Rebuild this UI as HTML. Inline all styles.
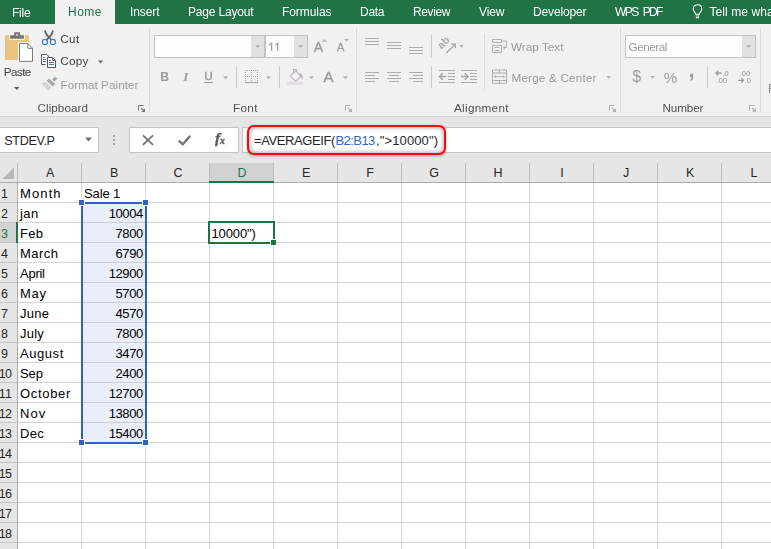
<!DOCTYPE html>
<html><head><meta charset="utf-8"><title>Excel</title>
<style>
html,body{margin:0;padding:0;}
body{width:771px;height:549px;overflow:hidden;position:relative;background:#fff;font-family:"Liberation Sans",sans-serif;}
.t{position:absolute;white-space:nowrap;line-height:1;}
.r{position:absolute;}
svg{position:absolute;left:0;top:0;overflow:visible;}
</style></head><body>

<div class="r" style="left:0px;top:117px;width:771px;height:46px;background:#e6e6e6;"></div>
<div class="r" style="left:-1px;top:127px;width:100px;height:26px;background:#fff;border:1px solid #c6c6c6;box-sizing:border-box;"></div>
<span class="t" style="left:4.20px;top:135.33px;font-size:12.6px;color:#262626;letter-spacing:-0.326px;">STDEV.P</span>
<div class="r" style="left:129px;top:127px;width:110px;height:26px;background:#fff;border:1px solid #c6c6c6;box-sizing:border-box;"></div>
<div class="r" style="left:242px;top:127px;width:530px;height:26px;background:#fff;border:1px solid #c6c6c6;box-sizing:border-box;"></div>
<div class="r" style="left:113px;top:135px;width:2px;height:2px;background:#a2a2a2;"></div>
<div class="r" style="left:113px;top:139px;width:2px;height:2px;background:#a2a2a2;"></div>
<div class="r" style="left:113px;top:143px;width:2px;height:2px;background:#a2a2a2;"></div>
<svg width="771" height="165" viewBox="0 0 771 165"><path d="M85 137.4 L92 137.4 L88.5 141.4 Z" fill="#6e6e6e"/><path d="M142.9 135.4 L153 144.8 M153 135.4 L142.9 144.8" stroke="#707070" stroke-width="1.7" fill="none"/><path d="M178.7 140.6 L182.8 144.3 L190.3 135.8" stroke="#737373" stroke-width="2.3" fill="none"/></svg>
<span class="t" style="left:215.30px;top:130.08px;font-size:15.5px;color:#5c5c5c;font-weight:bold;font-style:italic;font-family:'Liberation Serif',serif;will-change:transform;-webkit-text-stroke:0.35px #5c5c5c;">f</span>
<span class="t" style="left:219.80px;top:135.83px;font-size:9.8px;color:#5c5c5c;font-weight:bold;font-style:italic;font-family:'Liberation Serif',serif;will-change:transform;-webkit-text-stroke:0.35px #5c5c5c;">x</span>
<div class="r" style="left:247.3px;top:125.4px;width:198.8px;height:29.8px;background:#fff;border:2.1px solid #fd0808;border-radius:7px;box-sizing:border-box;box-shadow:inset 0 0 5px rgba(0,0,0,.45),0 1px 3px rgba(0,0,0,.3);"></div>
<span class="t" style="left:254.00px;top:134.00px;font-size:13px;color:#262626;letter-spacing:-0.406px;">=AVERAGEIF(</span>
<span class="t" style="left:335.50px;top:134.00px;font-size:13px;color:#3565c8;letter-spacing:-0.569px;">B2:B13</span>
<span class="t" style="left:376.00px;top:134.00px;font-size:13px;color:#262626;letter-spacing:0.121px;">,"&gt;10000")</span>
<div class="r" style="left:0px;top:163px;width:771px;height:20px;background:#e6e6e6;"></div>
<div class="r" style="left:0px;top:182px;width:771px;height:1px;background:#ababab;"></div>
<div class="r" style="left:0px;top:183px;width:18px;height:366px;background:#e6e6e6;"></div>
<div class="r" style="left:17px;top:183px;width:1px;height:366px;background:#ababab;"></div>
<div class="r" style="left:17px;top:163px;width:1px;height:19px;background:#bdbdbd;"></div>
<div class="r" style="left:81px;top:183px;width:1px;height:366px;background:#d4d4d4;"></div>
<div class="r" style="left:81px;top:163px;width:1px;height:19px;background:#bdbdbd;"></div>
<div class="r" style="left:145px;top:183px;width:1px;height:366px;background:#d4d4d4;"></div>
<div class="r" style="left:145px;top:163px;width:1px;height:19px;background:#bdbdbd;"></div>
<div class="r" style="left:209px;top:183px;width:1px;height:366px;background:#d4d4d4;"></div>
<div class="r" style="left:209px;top:163px;width:1px;height:19px;background:#bdbdbd;"></div>
<div class="r" style="left:273px;top:183px;width:1px;height:366px;background:#d4d4d4;"></div>
<div class="r" style="left:273px;top:163px;width:1px;height:19px;background:#bdbdbd;"></div>
<div class="r" style="left:337px;top:183px;width:1px;height:366px;background:#d4d4d4;"></div>
<div class="r" style="left:337px;top:163px;width:1px;height:19px;background:#bdbdbd;"></div>
<div class="r" style="left:401px;top:183px;width:1px;height:366px;background:#d4d4d4;"></div>
<div class="r" style="left:401px;top:163px;width:1px;height:19px;background:#bdbdbd;"></div>
<div class="r" style="left:465px;top:183px;width:1px;height:366px;background:#d4d4d4;"></div>
<div class="r" style="left:465px;top:163px;width:1px;height:19px;background:#bdbdbd;"></div>
<div class="r" style="left:529px;top:183px;width:1px;height:366px;background:#d4d4d4;"></div>
<div class="r" style="left:529px;top:163px;width:1px;height:19px;background:#bdbdbd;"></div>
<div class="r" style="left:593px;top:183px;width:1px;height:366px;background:#d4d4d4;"></div>
<div class="r" style="left:593px;top:163px;width:1px;height:19px;background:#bdbdbd;"></div>
<div class="r" style="left:657px;top:183px;width:1px;height:366px;background:#d4d4d4;"></div>
<div class="r" style="left:657px;top:163px;width:1px;height:19px;background:#bdbdbd;"></div>
<div class="r" style="left:721px;top:183px;width:1px;height:366px;background:#d4d4d4;"></div>
<div class="r" style="left:721px;top:163px;width:1px;height:19px;background:#bdbdbd;"></div>
<div class="r" style="left:785px;top:183px;width:1px;height:366px;background:#d4d4d4;"></div>
<div class="r" style="left:785px;top:163px;width:1px;height:19px;background:#bdbdbd;"></div>
<div class="r" style="left:18px;top:202px;width:753px;height:1px;background:#d4d4d4;"></div>
<div class="r" style="left:0px;top:202px;width:17px;height:1px;background:#c6c6c6;"></div>
<div class="r" style="left:18px;top:222px;width:753px;height:1px;background:#d4d4d4;"></div>
<div class="r" style="left:0px;top:222px;width:17px;height:1px;background:#c6c6c6;"></div>
<div class="r" style="left:18px;top:242px;width:753px;height:1px;background:#d4d4d4;"></div>
<div class="r" style="left:0px;top:242px;width:17px;height:1px;background:#c6c6c6;"></div>
<div class="r" style="left:18px;top:262px;width:753px;height:1px;background:#d4d4d4;"></div>
<div class="r" style="left:0px;top:262px;width:17px;height:1px;background:#c6c6c6;"></div>
<div class="r" style="left:18px;top:282px;width:753px;height:1px;background:#d4d4d4;"></div>
<div class="r" style="left:0px;top:282px;width:17px;height:1px;background:#c6c6c6;"></div>
<div class="r" style="left:18px;top:302px;width:753px;height:1px;background:#d4d4d4;"></div>
<div class="r" style="left:0px;top:302px;width:17px;height:1px;background:#c6c6c6;"></div>
<div class="r" style="left:18px;top:322px;width:753px;height:1px;background:#d4d4d4;"></div>
<div class="r" style="left:0px;top:322px;width:17px;height:1px;background:#c6c6c6;"></div>
<div class="r" style="left:18px;top:342px;width:753px;height:1px;background:#d4d4d4;"></div>
<div class="r" style="left:0px;top:342px;width:17px;height:1px;background:#c6c6c6;"></div>
<div class="r" style="left:18px;top:362px;width:753px;height:1px;background:#d4d4d4;"></div>
<div class="r" style="left:0px;top:362px;width:17px;height:1px;background:#c6c6c6;"></div>
<div class="r" style="left:18px;top:382px;width:753px;height:1px;background:#d4d4d4;"></div>
<div class="r" style="left:0px;top:382px;width:17px;height:1px;background:#c6c6c6;"></div>
<div class="r" style="left:18px;top:402px;width:753px;height:1px;background:#d4d4d4;"></div>
<div class="r" style="left:0px;top:402px;width:17px;height:1px;background:#c6c6c6;"></div>
<div class="r" style="left:18px;top:422px;width:753px;height:1px;background:#d4d4d4;"></div>
<div class="r" style="left:0px;top:422px;width:17px;height:1px;background:#c6c6c6;"></div>
<div class="r" style="left:18px;top:442px;width:753px;height:1px;background:#d4d4d4;"></div>
<div class="r" style="left:0px;top:442px;width:17px;height:1px;background:#c6c6c6;"></div>
<div class="r" style="left:18px;top:462px;width:753px;height:1px;background:#d4d4d4;"></div>
<div class="r" style="left:0px;top:462px;width:17px;height:1px;background:#c6c6c6;"></div>
<div class="r" style="left:18px;top:482px;width:753px;height:1px;background:#d4d4d4;"></div>
<div class="r" style="left:0px;top:482px;width:17px;height:1px;background:#c6c6c6;"></div>
<div class="r" style="left:18px;top:502px;width:753px;height:1px;background:#d4d4d4;"></div>
<div class="r" style="left:0px;top:502px;width:17px;height:1px;background:#c6c6c6;"></div>
<div class="r" style="left:18px;top:522px;width:753px;height:1px;background:#d4d4d4;"></div>
<div class="r" style="left:0px;top:522px;width:17px;height:1px;background:#c6c6c6;"></div>
<div class="r" style="left:18px;top:542px;width:753px;height:1px;background:#d4d4d4;"></div>
<div class="r" style="left:0px;top:542px;width:17px;height:1px;background:#c6c6c6;"></div>
<div class="r" style="left:210px;top:163px;width:63px;height:18px;background:#d2d2d2;"></div>
<div class="r" style="left:209px;top:181px;width:65px;height:2px;background:#217346;"></div>
<div class="r" style="left:0px;top:223px;width:16px;height:19px;background:#d2d2d2;"></div>
<div class="r" style="left:16px;top:222px;width:2px;height:21px;background:#217346;"></div>
<span class="t" style="left:45.93px;top:167.12px;font-size:12.5px;color:#262626;">A</span>
<span class="t" style="left:109.93px;top:167.12px;font-size:12.5px;color:#262626;">B</span>
<span class="t" style="left:173.59px;top:167.12px;font-size:12.5px;color:#262626;">C</span>
<span class="t" style="left:237.59px;top:167.12px;font-size:12.5px;color:#217346;">D</span>
<span class="t" style="left:301.93px;top:167.12px;font-size:12.5px;color:#262626;">E</span>
<span class="t" style="left:366.28px;top:167.12px;font-size:12.5px;color:#262626;">F</span>
<span class="t" style="left:429.24px;top:167.12px;font-size:12.5px;color:#262626;">G</span>
<span class="t" style="left:493.59px;top:167.12px;font-size:12.5px;color:#262626;">H</span>
<span class="t" style="left:560.36px;top:167.12px;font-size:12.5px;color:#262626;">I</span>
<span class="t" style="left:622.98px;top:167.12px;font-size:12.5px;color:#262626;">J</span>
<span class="t" style="left:685.93px;top:167.12px;font-size:12.5px;color:#262626;">K</span>
<span class="t" style="left:750.62px;top:167.12px;font-size:12.5px;color:#262626;">L</span>
<svg width="20" height="185"><path d="M14 167.5 V179 H2.5 Z" fill="#b7b7b7"/></svg>
<span class="t" style="left:1.00px;top:188.02px;font-size:12.5px;color:#262626;">1</span>
<span class="t" style="left:1.00px;top:208.02px;font-size:12.5px;color:#262626;">2</span>
<span class="t" style="left:1.00px;top:228.02px;font-size:12.5px;color:#217346;">3</span>
<span class="t" style="left:1.00px;top:248.02px;font-size:12.5px;color:#262626;">4</span>
<span class="t" style="left:1.00px;top:268.02px;font-size:12.5px;color:#262626;">5</span>
<span class="t" style="left:1.00px;top:288.02px;font-size:12.5px;color:#262626;">6</span>
<span class="t" style="left:1.00px;top:308.02px;font-size:12.5px;color:#262626;">7</span>
<span class="t" style="left:1.00px;top:328.02px;font-size:12.5px;color:#262626;">8</span>
<span class="t" style="left:1.00px;top:348.02px;font-size:12.5px;color:#262626;">9</span>
<span class="t" style="left:-1.20px;top:368.02px;font-size:12.5px;color:#262626;letter-spacing:-0.704px;">10</span>
<span class="t" style="left:-1.20px;top:388.02px;font-size:12.5px;color:#262626;letter-spacing:0.224px;">11</span>
<span class="t" style="left:-1.20px;top:408.02px;font-size:12.5px;color:#262626;letter-spacing:-0.704px;">12</span>
<span class="t" style="left:-1.20px;top:428.02px;font-size:12.5px;color:#262626;letter-spacing:-0.704px;">13</span>
<span class="t" style="left:-1.20px;top:448.02px;font-size:12.5px;color:#262626;letter-spacing:-0.704px;">14</span>
<span class="t" style="left:-1.20px;top:468.02px;font-size:12.5px;color:#262626;letter-spacing:-0.704px;">15</span>
<span class="t" style="left:-1.20px;top:488.02px;font-size:12.5px;color:#262626;letter-spacing:-0.704px;">16</span>
<span class="t" style="left:-1.20px;top:508.02px;font-size:12.5px;color:#262626;letter-spacing:-0.704px;">17</span>
<span class="t" style="left:-1.20px;top:528.02px;font-size:12.5px;color:#262626;letter-spacing:-0.704px;">18</span>
<div class="r" style="left:82px;top:203px;width:63px;height:239px;background:#e9eef9;"></div>
<div class="r" style="left:83px;top:222px;width:62px;height:1px;background:#cbced6;"></div>
<div class="r" style="left:83px;top:242px;width:62px;height:1px;background:#cbced6;"></div>
<div class="r" style="left:83px;top:262px;width:62px;height:1px;background:#cbced6;"></div>
<div class="r" style="left:83px;top:282px;width:62px;height:1px;background:#cbced6;"></div>
<div class="r" style="left:83px;top:302px;width:62px;height:1px;background:#cbced6;"></div>
<div class="r" style="left:83px;top:322px;width:62px;height:1px;background:#cbced6;"></div>
<div class="r" style="left:83px;top:342px;width:62px;height:1px;background:#cbced6;"></div>
<div class="r" style="left:83px;top:362px;width:62px;height:1px;background:#cbced6;"></div>
<div class="r" style="left:83px;top:382px;width:62px;height:1px;background:#cbced6;"></div>
<div class="r" style="left:83px;top:402px;width:62px;height:1px;background:#cbced6;"></div>
<div class="r" style="left:83px;top:422px;width:62px;height:1px;background:#cbced6;"></div>
<span class="t" style="left:20.00px;top:187.00px;font-size:13px;color:#000;letter-spacing:1.117px;">Month</span>
<span class="t" style="left:84.00px;top:187.00px;font-size:13px;color:#000;letter-spacing:-0.132px;">Sale 1</span>
<span class="t" style="left:20.00px;top:207.00px;font-size:13px;color:#000;letter-spacing:0.476px;">jan</span>
<span class="t" style="right:628.20px;top:207.00px;font-size:13px;color:#000;letter-spacing:-0.400px;">10004</span>
<span class="t" style="left:20.00px;top:227.00px;font-size:13px;color:#000;letter-spacing:0.299px;">Feb</span>
<span class="t" style="right:628.20px;top:227.00px;font-size:13px;color:#000;letter-spacing:-0.400px;">7800</span>
<span class="t" style="left:20.00px;top:247.00px;font-size:13px;color:#000;letter-spacing:0.470px;">March</span>
<span class="t" style="right:628.20px;top:247.00px;font-size:13px;color:#000;letter-spacing:-0.400px;">6790</span>
<span class="t" style="left:20.00px;top:267.00px;font-size:13px;color:#000;letter-spacing:-0.252px;">April</span>
<span class="t" style="right:628.20px;top:267.00px;font-size:13px;color:#000;letter-spacing:-0.400px;">12900</span>
<span class="t" style="left:20.00px;top:287.00px;font-size:13px;color:#000;letter-spacing:0.720px;">May</span>
<span class="t" style="right:628.20px;top:287.00px;font-size:13px;color:#000;letter-spacing:-0.400px;">5700</span>
<span class="t" style="left:20.00px;top:307.00px;font-size:13px;color:#000;letter-spacing:0.270px;">June</span>
<span class="t" style="right:628.20px;top:307.00px;font-size:13px;color:#000;letter-spacing:-0.400px;">4570</span>
<span class="t" style="left:20.00px;top:327.00px;font-size:13px;color:#000;letter-spacing:0.227px;">July</span>
<span class="t" style="right:628.20px;top:327.00px;font-size:13px;color:#000;letter-spacing:-0.400px;">7800</span>
<span class="t" style="left:20.00px;top:347.00px;font-size:13px;color:#000;letter-spacing:0.565px;">August</span>
<span class="t" style="right:628.20px;top:347.00px;font-size:13px;color:#000;letter-spacing:-0.400px;">3470</span>
<span class="t" style="left:20.00px;top:367.00px;font-size:13px;color:#000;letter-spacing:-0.066px;">Sep</span>
<span class="t" style="right:628.20px;top:367.00px;font-size:13px;color:#000;letter-spacing:-0.400px;">2400</span>
<span class="t" style="left:20.00px;top:387.00px;font-size:13px;color:#000;letter-spacing:0.676px;">October</span>
<span class="t" style="right:628.20px;top:387.00px;font-size:13px;color:#000;letter-spacing:-0.400px;">12700</span>
<span class="t" style="left:20.00px;top:407.00px;font-size:13px;color:#000;letter-spacing:1.041px;">Nov</span>
<span class="t" style="right:628.20px;top:407.00px;font-size:13px;color:#000;letter-spacing:-0.400px;">13800</span>
<span class="t" style="left:20.00px;top:427.00px;font-size:13px;color:#000;letter-spacing:0.341px;">Dec</span>
<span class="t" style="right:628.20px;top:427.00px;font-size:13px;color:#000;letter-spacing:-0.400px;">15400</span>
<div class="r" style="left:80.6px;top:202px;width:2px;height:242px;background:#2f62c6;"></div>
<div class="r" style="left:145px;top:202px;width:2px;height:242px;background:#2f62c6;"></div>
<div class="r" style="left:81px;top:201.6px;width:66px;height:2px;background:#2f62c6;"></div>
<div class="r" style="left:81px;top:442px;width:66px;height:2px;background:#2f62c6;"></div>
<div class="r" style="left:78px;top:199px;width:5px;height:5px;background:#2f62c6;border:1px solid #fff;"></div>
<div class="r" style="left:142px;top:199px;width:5px;height:5px;background:#2f62c6;border:1px solid #fff;"></div>
<div class="r" style="left:78px;top:439px;width:5px;height:5px;background:#2f62c6;border:1px solid #fff;"></div>
<div class="r" style="left:142px;top:439px;width:5px;height:5px;background:#2f62c6;border:1px solid #fff;"></div>
<div class="r" style="left:208px;top:221px;width:67px;height:23px;background:#fff;border:2px solid #217346;box-sizing:border-box;"></div>
<span class="t" style="left:211.40px;top:227.00px;font-size:13px;color:#000;letter-spacing:-0.1px;">10000")</span>
<div class="r" style="left:270px;top:239px;width:5px;height:5px;background:#217346;border:1px solid #fff;border-right:none;border-bottom:none;"></div>
<div id="rb" style="position:absolute;left:0;top:0;width:771px;height:117px;overflow:hidden;will-change:transform">
<div class="r" style="left:0px;top:0px;width:771px;height:24px;background:#217346;"></div>
<div class="r" style="left:55px;top:0px;width:60px;height:24px;background:#f1f1f1;"></div>
<span class="t" style="left:12.00px;top:7.24px;font-size:12px;color:#ffffff;letter-spacing:-0.245px;">File</span>
<span class="t" style="left:68.00px;top:6.24px;font-size:12px;color:#217346;letter-spacing:0.463px;">Home</span>
<span class="t" style="left:130.00px;top:6.24px;font-size:12px;color:#ffffff;letter-spacing:-0.102px;">Insert</span>
<span class="t" style="left:188.00px;top:6.24px;font-size:12px;color:#ffffff;letter-spacing:-0.189px;">Page Layout</span>
<span class="t" style="left:282.00px;top:6.24px;font-size:12px;color:#ffffff;letter-spacing:-0.073px;">Formulas</span>
<span class="t" style="left:360.00px;top:6.24px;font-size:12px;color:#ffffff;letter-spacing:-0.283px;">Data</span>
<span class="t" style="left:413.00px;top:6.24px;font-size:12px;color:#ffffff;letter-spacing:-0.369px;">Review</span>
<span class="t" style="left:479.00px;top:6.24px;font-size:12px;color:#ffffff;letter-spacing:-0.098px;">View</span>
<span class="t" style="left:533.00px;top:6.24px;font-size:12px;color:#ffffff;letter-spacing:-0.150px;">Developer</span>
<span class="t" style="left:615.00px;top:6.24px;font-size:12px;color:#ffffff;letter-spacing:-1.517px;">WPS</span>
<span class="t" style="left:642.80px;top:6.24px;font-size:12px;color:#ffffff;letter-spacing:-1.750px;">PDF</span>
<span class="t" style="left:709.50px;top:6.24px;font-size:12px;color:#ffffff;letter-spacing:0.073px;">Tell me what</span>
<div class="r" style="left:0px;top:24px;width:771px;height:93px;background:#f1f1f1;"></div>
<div class="r" style="left:0px;top:116px;width:771px;height:1px;background:#d4d4d4;"></div>
<div class="r" style="left:149px;top:28px;width:1px;height:84px;background:#dadada;"></div>
<div class="r" style="left:356px;top:28px;width:1px;height:84px;background:#dadada;"></div>
<div class="r" style="left:620px;top:28px;width:1px;height:84px;background:#dadada;"></div>
<div class="r" style="left:760px;top:28px;width:1px;height:84px;background:#dadada;"></div>
<div class="r" style="left:236px;top:66px;width:1px;height:22px;background:#cbcbcb;"></div>
<div class="r" style="left:279px;top:66px;width:1px;height:22px;background:#cbcbcb;"></div>
<div class="r" style="left:431px;top:35px;width:1px;height:22px;background:#cbcbcb;"></div>
<div class="r" style="left:431px;top:66px;width:1px;height:22px;background:#cbcbcb;"></div>
<div class="r" style="left:484px;top:34px;width:1px;height:55px;background:#dadada;"></div>
<div class="r" style="left:707px;top:66px;width:1px;height:22px;background:#cbcbcb;"></div>
<span class="t" style="left:3.80px;top:66.30px;font-size:11.7px;color:#404040;letter-spacing:-0.580px;">Paste</span>
<span class="t" style="left:60.30px;top:33.10px;font-size:11.7px;color:#404040;letter-spacing:0.346px;">Cut</span>
<span class="t" style="left:60.30px;top:55.30px;font-size:11.7px;color:#404040;letter-spacing:0.262px;">Copy</span>
<span class="t" style="left:60.50px;top:79.10px;font-size:11.7px;color:#9c9c9c;letter-spacing:0.048px;">Format Painter</span>
<span class="t" style="left:37.50px;top:101.50px;font-size:11.7px;color:#505050;letter-spacing:0.053px;">Clipboard</span>
<span class="t" style="left:233.00px;top:101.50px;font-size:11.7px;color:#505050;letter-spacing:0.363px;">Font</span>
<span class="t" style="left:454.00px;top:101.50px;font-size:11.7px;color:#505050;letter-spacing:0.309px;">Alignment</span>
<span class="t" style="left:662.50px;top:101.50px;font-size:11.7px;color:#505050;letter-spacing:-0.123px;">Number</span>
<div class="r" style="left:154px;top:35px;width:111px;height:23px;background:#fdfdfd;border:1px solid #c3c3c3;box-sizing:border-box;"></div>
<div class="r" style="left:251px;top:36px;width:13px;height:21px;background:#e1e1e1;"></div>
<div class="r" style="left:265px;top:35px;width:43px;height:23px;background:#fdfdfd;border:1px solid #c3c3c3;box-sizing:border-box;"></div>
<div class="r" style="left:294px;top:36px;width:13px;height:21px;background:#e1e1e1;"></div>
<div class="r" style="left:625px;top:35px;width:131px;height:23px;background:#fdfdfd;border:1px solid #c3c3c3;box-sizing:border-box;"></div>
<div class="r" style="left:742px;top:36px;width:13px;height:21px;background:#e1e1e1;"></div>
<span class="t" style="left:628.50px;top:41.10px;font-size:11.7px;color:#9c9c9c;letter-spacing:-0.437px;">General</span>
<span class="t" style="left:511.00px;top:40.90px;font-size:11.7px;color:#9c9c9c;letter-spacing:0.033px;">Wrap Text</span>
<span class="t" style="left:511.50px;top:72.10px;font-size:11.7px;color:#9c9c9c;letter-spacing:0.186px;">Merge &amp; Center</span>
<span class="t" style="left:160.30px;top:70.67px;font-size:12.2px;color:#9c9c9c;font-weight:bold;">B</span>
<span class="t" style="left:183.30px;top:70.16px;font-size:13.0px;color:#9c9c9c;font-weight:bold;font-style:italic;font-family:'Liberation Serif',serif;">I</span>
<span class="t" style="left:204.20px;top:70.61px;font-size:11.8px;color:#9c9c9c;-webkit-text-stroke:0.4px #9c9c9c;">U</span>
<div class="r" style="left:204px;top:82px;width:9px;height:1px;background:#9c9c9c;"></div>
<span class="t" style="left:313.80px;top:39.95px;font-size:14px;color:#9c9c9c;-webkit-text-stroke:0.35px #9c9c9c;">A</span>
<span class="t" style="left:337.00px;top:42.49px;font-size:11px;color:#9c9c9c;-webkit-text-stroke:0.3px #9c9c9c;">A</span>
<span class="t" style="left:323.60px;top:69.10px;font-size:15px;color:#9c9c9c;-webkit-text-stroke:0.45px #9c9c9c;">A</span>
<span class="t" style="left:632.20px;top:69.06px;font-size:16px;color:#9c9c9c;">$</span>
<span class="t" style="left:663.80px;top:70.33px;font-size:15.2px;color:#9c9c9c;">%</span>
<span class="t" style="left:688.50px;top:59.38px;font-size:22px;color:#9c9c9c;font-weight:bold;">,</span>
<span class="t" style="left:768.00px;top:82.84px;font-size:12px;color:#8c8c8c;">F</span>
<svg width="771" height="120" viewBox="0 0 771 120"><rect x="5" y="35" width="24" height="25" rx="1.6" fill="#eac37c"/><rect x="9.2" y="34" width="15.7" height="6" fill="#f3f0ea"/><path d="M10.2 35.2 H14.2 V32.3 H20.1 V35.2 H23.9 V38.8 H10.2 Z" fill="#737373"/><circle cx="17.1" cy="34.9" r="0.95" fill="#f1f1f1"/><rect x="18" y="42.1" width="16" height="20.8" fill="#f4f4f4"/><path d="M19.5 43.6 H27.9 L32.5 48.3 V61.4 H19.5 Z" fill="#ffffff" stroke="#787878" stroke-width="1"/><path d="M27.9 43.6 V48.3 H32.5" fill="none" stroke="#787878" stroke-width="1"/><path d="M14 87 L19.4 87 L16.7 90 Z" fill="#5e5e5e"/><path d="M44.3 30.3 L45.9 30.3 C46.2 32.6 47.6 34.4 49 35.9 C50.4 34.4 51.8 32.6 52.1 30.3 L53.7 30.3 C53.6 33.4 52 35.6 50.2 37.3 L52.3 39.9 L50.6 40.6 L49 38.5 L47.4 40.6 L45.7 39.9 L47.8 37.3 C46 35.6 44.4 33.4 44.3 30.3 Z" fill="#636363"/><circle cx="44.9" cy="42" r="2.55" fill="none" stroke="#4680c2" stroke-width="1.2"/><circle cx="52.9" cy="42" r="2.55" fill="none" stroke="#4680c2" stroke-width="1.2"/><path d="M45.5 64.5 H41.5 V54.5 H46.8 L48.3 56 V57" fill="#fdfdfd" stroke="#585858" stroke-width="1" stroke-linejoin="miter"/><path d="M47.5 57.5 H52.7 L55.5 60.4 V67.5 H47.5 Z" fill="#fdfdfd" stroke="#585858" stroke-width="1"/><path d="M52.6 57.8 V60.5 H55.4" fill="none" stroke="#585858" stroke-width="1"/><path d="M43 57.5 H44.8 M43 59.5 H45.8 M43 61.5 H45.8 M49 60.5 H50.8 M49 62.5 H53.8 M49 64.5 H53.8" stroke="#3b73b9" stroke-width="1" fill="none"/><path d="M98 60.4 L103.2 60.4 L100.6 63.4 Z" fill="#6a6a6a"/><path d="M55.1 76.5 L57.4 78.7 L54.4 81.6 L52.2 79.4 Z" fill="#a9a7a9"/><path d="M48.9 78.5 L55.4 84 L52.9 86.4 L46.5 80.7 Z" fill="#a9a7a9"/><path d="M45.3 81.8 L51.7 87.3 L48.2 90.9 L41 83 Z" fill="#d6d2d6"/><path d="M138.5 110.5 V105.5 H143.5" fill="none" stroke="#7a7a7a" stroke-width="1"/><path d="M141 108 L143.5 110.5" fill="none" stroke="#7a7a7a" stroke-width="1.1"/><path d="M145 108.2 V112 H141.2 Z" fill="#7a7a7a"/><path d="M345.5 110.5 V105.5 H350.5" fill="none" stroke="#b0b0b0" stroke-width="1"/><path d="M348 108 L350.5 110.5" fill="none" stroke="#b0b0b0" stroke-width="1.1"/><path d="M352 108.2 V112 H348.2 Z" fill="#b0b0b0"/><path d="M609.5 110.5 V105.5 H614.5" fill="none" stroke="#b0b0b0" stroke-width="1"/><path d="M612 108 L614.5 110.5" fill="none" stroke="#b0b0b0" stroke-width="1.1"/><path d="M616 108.2 V112 H612.2 Z" fill="#b0b0b0"/><path d="M749.5 110.5 V105.5 H754.5" fill="none" stroke="#b0b0b0" stroke-width="1"/><path d="M752 108 L754.5 110.5" fill="none" stroke="#b0b0b0" stroke-width="1.1"/><path d="M756 108.2 V112 H752.2 Z" fill="#b0b0b0"/><path d="M255 45 L260.2 45 L257.6 48 Z" fill="#b4b4b4"/><path d="M298 45 L303.2 45 L300.6 48 Z" fill="#b4b4b4"/><path d="M746 45 L751.2 45 L748.6 48 Z" fill="#b4b4b4"/><path d="M223 76.3 L228.2 76.3 L225.6 79.3 Z" fill="#b4b4b4"/><path d="M265.8 76.3 L271.0 76.3 L268.40000000000003 79.3 Z" fill="#b4b4b4"/><path d="M309 76.3 L314.2 76.3 L311.6 79.3 Z" fill="#b4b4b4"/><path d="M342.8 76.3 L348.0 76.3 L345.40000000000003 79.3 Z" fill="#b4b4b4"/><path d="M459 45 L464 45 L461.5 47.8 Z" fill="#b4b4b4"/><path d="M606.2 76.1 L611.2 76.1 L608.7 78.89999999999999 Z" fill="#b4b4b4"/><path d="M650 76 L655 76 L652.5 79 Z" fill="#b4b4b4"/><path d="M322 41.699999999999996 L326.8 41.699999999999996 L324.4 38.9 Z" fill="#b4b4b4"/><path d="M344.2 38.9 L349.0 38.9 L346.59999999999997 41.699999999999996 Z" fill="#b4b4b4"/><path d="M269.2 45 L271.6 43.2 V51 M275.4 45 L277.8 43.2 V51" stroke="#a59fa5" stroke-width="1.25" fill="none"/><path d="M245 70.5 h1 M245 76.5 h1 M247 70.5 h1 M247 76.5 h1 M249 70.5 h1 M249 76.5 h1 M251 70.5 h1 M251 76.5 h1 M253 70.5 h1 M253 76.5 h1 M255 70.5 h1 M255 76.5 h1 M257 70.5 h1 M257 76.5 h1 M245 70.5 h1 M251 70.5 h1 M257 70.5 h1 M245 72.5 h1 M251 72.5 h1 M257 72.5 h1 M245 74.5 h1 M251 74.5 h1 M257 74.5 h1 M245 76.5 h1 M251 76.5 h1 M257 76.5 h1 M245 78.5 h1 M251 78.5 h1 M257 78.5 h1 M245 80.5 h1 M251 80.5 h1 M257 80.5 h1 " stroke="#b4a8b4" stroke-width="1" fill="none" shape-rendering="crispEdges"/><path d="M245 82.5 H258" stroke="#b0a8b0" stroke-width="1.2"/><path d="M293.5 73.5 V69.5 H296.5 V72 M290.2 76.2 L295.8 70.8 L301.2 76 L295.6 81.2 Z" fill="#f6f2f6" stroke="#b9b3b9" stroke-width="1.1" stroke-linejoin="round"/><path d="M300.5 73.2 C303 74.5 303.2 77.5 302.2 79.5 C301.6 77.5 300.8 76.5 299.6 75.6 Z" fill="#b9b3b9"/><rect x="287" y="81.4" width="16" height="3.4" fill="#e4dce4"/><path d="M365 38.5 H379 M365 41.5 H379 M365 44.5 H379 M387 42.5 H401 M387 45.5 H401 M387 48.5 H401 M409 47.5 H423 M409 50.5 H423 M409 53.5 H423 M365 72.5 H379 M387 72.5 H401 M409 72.5 H423 M365 75.5 H375 M389 75.5 H399 M413 75.5 H423 M365 78.5 H379 M387 78.5 H401 M409 78.5 H423 M365 81.5 H375 M389 81.5 H399 M413 81.5 H423 M439 70.5 H455 M439 82.5 H455 M448 73.5 H455 M448 76.5 H455 M448 79.5 H455 M461 70.5 H477 M461 82.5 H477 M470 73.5 H477 M470 76.5 H477 M470 79.5 H477 " stroke="#adabad" stroke-width="1.15" fill="none"/><path d="M440 76.5 H446.5 M442.8 73.3 L439.6 76.5 L442.8 79.7" stroke="#a8a4a8" stroke-width="1.6" fill="none"/><path d="M461 76.5 H467.5 M464.7 73.3 L467.9 76.5 L464.7 79.7" stroke="#a8a4a8" stroke-width="1.6" fill="none"/><path d="M446.2 53 L455 44.6 M451.3 44 L455.4 44.1 L455.2 48.2" stroke="#aaa6aa" stroke-width="1.3" fill="none"/><text x="0" y="0" font-family="Liberation Sans" font-size="10.5" font-weight="bold" fill="#aaa6aa" transform="translate(441.6,49.4) rotate(-45)">ab</text><path d="M492.5 39.5 H501.5 V42.5 H492.5 Z M492.5 45.5 H501.5 V52.5 H492.5 Z M494.5 47.5 H499.5 M494.5 50.5 H499.5 M501.5 41 H506.5 V47.5 H503.5 M505 45.8 L503.2 47.6 L505 49.4" stroke="#b0acb0" stroke-width="1" fill="none"/><path d="M492.5 70 H506.5 V83.3 H492.5 Z M492.5 73 H506.5 M492.5 80.5 H506.5 M499.5 70 V73 M499.5 80.5 V83.3 M494.5 76.7 H504.5 M496 75.2 L494.5 76.7 L496 78.2 M503 75.2 L504.5 76.7 L503 78.2" stroke="#b0acb0" stroke-width="1" fill="none"/><text x="722.3" y="76" font-family="Liberation Sans" font-size="8" fill="#9e9a9e" letter-spacing="-0.2">.0</text><text x="716.5" y="83.3" font-family="Liberation Sans" font-size="8" fill="#9e9a9e" letter-spacing="-0.2">.00</text><path d="M716 73 H721.5 M718.2 70.8 L716 73 L718.2 75.2" stroke="#9e9a9e" stroke-width="1.3" fill="none"/><text x="739.5" y="76" font-family="Liberation Sans" font-size="8" fill="#9e9a9e" letter-spacing="-0.2">.00</text><text x="744.5" y="83.3" font-family="Liberation Sans" font-size="8" fill="#9e9a9e" letter-spacing="-0.2">.0</text><path d="M738 80.3 H743.5 M741.3 78.1 L743.5 80.3 L741.3 82.5" stroke="#9e9a9e" stroke-width="1.3" fill="none"/><path d="M695.7 14.2 C695.6 12.4 693.2 11.6 693.2 8.8 C693.2 6.4 695.1 4.7 697.5 4.7 C699.9 4.7 701.8 6.4 701.8 8.8 C701.8 11.6 699.4 12.4 699.3 14.2 Z M695.7 15.9 H699.3 M696 17.6 H699" stroke="#ffffff" stroke-width="1.05" fill="none"/></svg>
</div>
</body></html>
